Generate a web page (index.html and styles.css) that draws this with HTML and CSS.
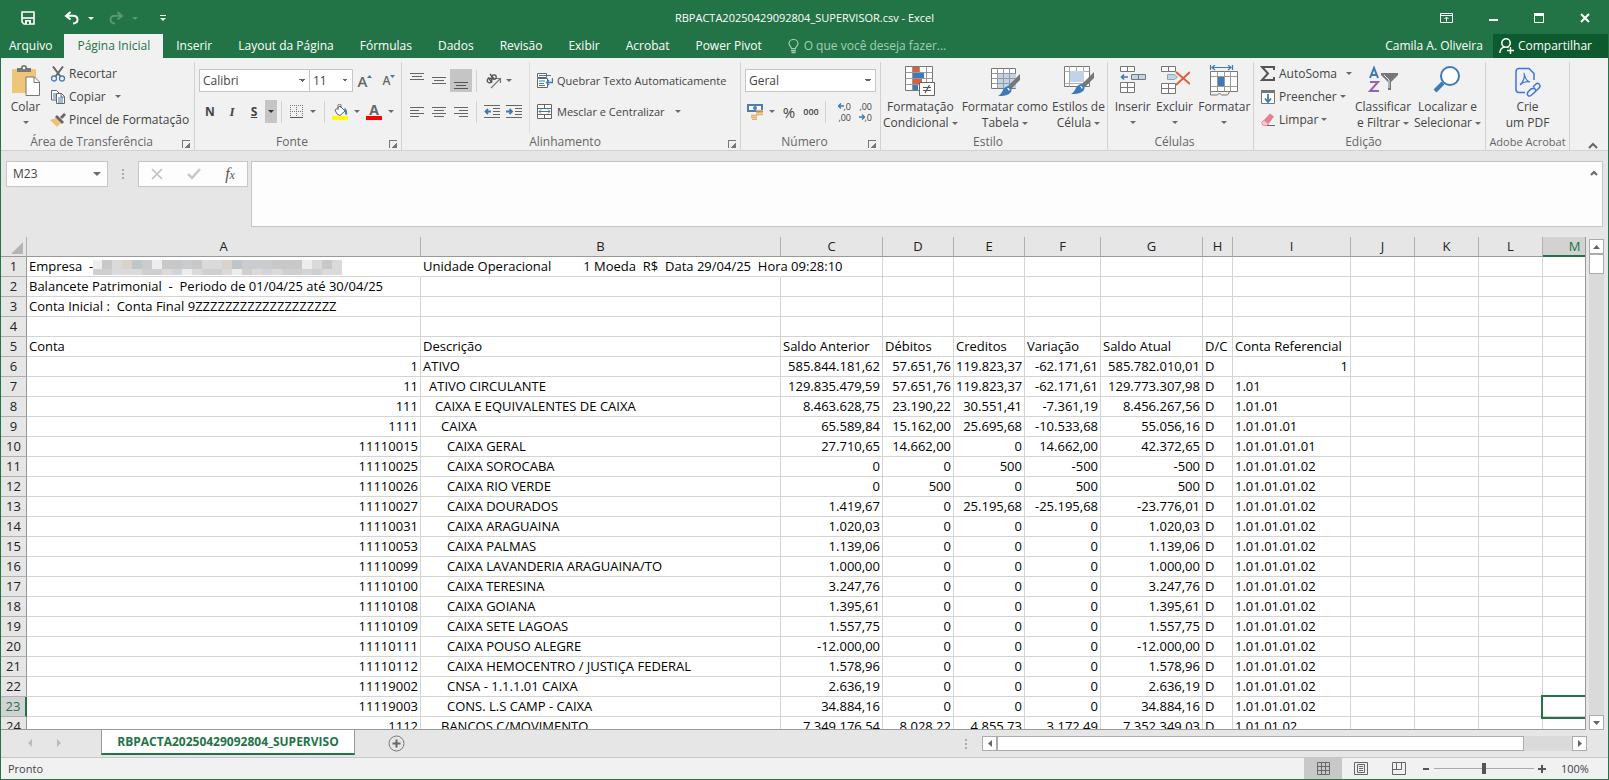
FILE: index.html
```html
<!DOCTYPE html>
<html lang="pt-BR">
<head>
<meta charset="utf-8">
<title>RBPACTA20250429092804_SUPERVISOR.csv - Excel</title>
<link rel="stylesheet" href="styles.css">
</head>
<body>
<header class="titlebar">
  <div class="quick">
    <button aria-label="Salvar"><svg width="14" height="14" viewBox="0 0 14 14"><path d="M1 1h12v12H3l-2-2z" fill="none" stroke="#fff" stroke-width="1.6"/><path d="M1 7h12" stroke="#fff" stroke-width="1.6"/><path d="M4 9h6v4H4z" fill="#fff"/><path d="M6 10.500h2V13H6z" fill="#227447"/></svg></button>
    <button class="undo" aria-label="Desfazer"><svg width="16" height="14" viewBox="0 0 16 14"><path d="M6.500 1L2 5l4.500 3.500M2.500 4.800H9c6 0 6 7.500 0 7.700" fill="none" stroke="#fff" stroke-width="2"/></svg><i class="arrow"></i></button>
    <button class="redo" aria-label="Refazer"><svg width="16" height="14" viewBox="0 0 16 14"><path d="M9.500 1L14 5 9.500 8.500M13.500 4.800H7c-6 0-6 7.500 0 7.700" fill="none" stroke="#fff" stroke-width="2"/></svg><i class="arrow"></i></button>
    <button class="custom" aria-label="Personalizar"><svg width="6" height="7" viewBox="0 0 6 7"><path d="M0 .5h6" stroke="#fff"/><path d="M0 3h6L3 6z" fill="#fff"/></svg></button>
  </div>
  <h1 class="doc-title">RBPACTA20250429092804_SUPERVISOR.csv - Excel</h1>
  <div class="window-buttons">
    <button aria-label="Opções da faixa"><svg width="13" height="10" viewBox="0 0 13 10"><path d="M.5.5h12v9H.5zM.5 2.500h12" fill="none" stroke="#fff"/><path d="M6.500 8.500V5M4.500 6l2-2 2 2" fill="none" stroke="#fff"/></svg></button>
    <button aria-label="Minimizar"><svg width="9" height="10" viewBox="0 0 9 10"><path d="M0 7h9" stroke="#fff" stroke-width="2"/></svg></button>
    <button aria-label="Maximizar"><svg width="10" height="10" viewBox="0 0 10 10"><path d="M.5.5h9v9h-9z" fill="none" stroke="#fff"/><path d="M0 1.500h10" stroke="#fff" stroke-width="3"/></svg></button>
    <button aria-label="Fechar"><svg width="10" height="10" viewBox="0 0 10 10"><path d="M1 1l8 8M9 1L1 9" stroke="#fff" stroke-width="2"/></svg></button>
  </div>
</header>
<nav class="tabs">
  <button class="file">Arquivo</button>
  <button class="active">Página Inicial</button>
  <button>Inserir</button>
  <button>Layout da Página</button>
  <button>Fórmulas</button>
  <button>Dados</button>
  <button>Revisão</button>
  <button>Exibir</button>
  <button>Acrobat</button>
  <button>Power Pivot</button>
  <label class="tell"><svg width="11" height="15" viewBox="0 0 11 15"><path d="M3.500 9.500C3.500 8 1 7 1 4.500a4.500 4 0 0 1 9 0C10 7 7.500 8 7.500 9.500z" fill="none" stroke="#a6cdb7" stroke-width="1.200"/><path d="M3 11.500h5M3.500 13.500h4" stroke="#a6cdb7" stroke-width="1.400"/></svg><input type="text" placeholder="O que você deseja fazer..." aria-label="O que você deseja fazer"></label>
  <span class="user">Camila A. Oliveira</span>
  <button class="share"><svg width="15" height="16" viewBox="0 0 15 16"><circle cx="7" cy="5" r="4.200" fill="none" stroke="#fff" stroke-width="1.500"/><path d="M.8 15c.2-3 2-5.500 5-6M8 9l1.500.7M8 12.500h7M11.500 9v7" fill="none" stroke="#fff" stroke-width="1.400"/></svg>Compartilhar</button>
</nav>

<section class="ribbon">
  <div class="group">
    <div class="group-body">
      <button class="big paste"><svg width="30" height="32" viewBox="0 0 30 32"><path d="M1 4h24v24H1z" fill="#eec679"/><path d="M6 3h4a3 3 0 0 1 6 0h4v4H6z" fill="#777"/><circle cx="13" cy="3" r="1.200" fill="#fff"/><path d="M15 12h8.500l5 5v13.500H15z" fill="#fff" stroke="#777"/><path d="M23 12v5.500h5.500" fill="none" stroke="#777"/></svg><span>Colar</span><i class="arrow"></i></button>
      <div class="stack">
        <button><svg width="16" height="16" viewBox="0 0 16 16"><path d="M3 .5l7.500 10M13 .5L5.500 10.500" stroke="#666" stroke-width="2"/><circle cx="4" cy="12.500" r="2.500" fill="none" stroke="#4a7fb5" stroke-width="1.300"/><circle cx="12" cy="12.500" r="2.500" fill="none" stroke="#4a7fb5" stroke-width="1.300"/></svg>Recortar</button>
        <button><svg width="16" height="16" viewBox="0 0 16 16"><path d="M1.500 1.500h5l2.500 2.500v7H1.500z" fill="#fff" stroke="#666"/><path d="M3 5h4M3 7h3M3 9h3" stroke="#3c7ab8"/><path d="M6.500 4.500h5l3 3v7h-8z" fill="#fff" stroke="#666"/><path d="M11 4.500V8h3.500" fill="none" stroke="#666"/><path d="M8 9h5M8 11h5M8 13h5" stroke="#3c7ab8"/></svg>Copiar<i class="arrow far"></i></button>
        <button><svg width="16" height="16" viewBox="0 0 16 16"><path d="M0 8l6-2 5 5-4 4z" fill="#eec07c"/><path d="M5 5l2-2 7 7-2 2z" fill="#666"/><path d="M10 5l4-4 2 2-4 4z" fill="#666"/></svg>Pincel de Formatação</button>
      </div>
    </div>
    <div class="group-name">Área de Transferência<button class="launch" aria-label="Opções"></button></div>
  </div>

  <div class="group">
    <div class="rows font-rows">
      <div class="row">
        <select class="font-name" aria-label="Fonte"><option>Calibri</option></select><select class="font-size" aria-label="Tamanho"><option>11</option></select>
        <button class="grow" aria-label="Aumentar fonte">A<svg width="5" height="3" viewBox="0 0 5 3"><path d="M0 3h5L2.500 0z" fill="#3c7ab8"/></svg></button>
        <button class="shrink" aria-label="Diminuir fonte">A<svg width="5" height="3" viewBox="0 0 5 3"><path d="M0 0h5L2.500 3z" fill="#3c7ab8"/></svg></button>
      </div>
      <div class="row format">
        <button class="bold">N</button><button class="italic">I</button><button class="under">S</button><button class="pressed drop" aria-label="Sublinhado"><i class="arrow dark"></i></button>
        <i class="rule"></i>
        <button class="pair" aria-label="Bordas"><svg width="14" height="14" viewBox="0 0 14 14"><path d="M.5 0v12M6.500 0v12M12.500 0v12M0 .5h13M0 6.500h13" fill="none" stroke="#777" stroke-dasharray="1 1"/><path d="M0 12.500h13" stroke="#555"/></svg><i class="arrow"></i></button>
        <i class="rule"></i>
        <button class="pair" aria-label="Cor de preenchimento"><svg width="16" height="16" viewBox="0 0 16 16"><path d="M3 6l5-4 5 5-5 4.500L5 10z" fill="#fff" stroke="#666"/><path d="M6 6V1.500a1.500 1.500 0 0 1 3 0V4" fill="none" stroke="#666"/><path d="M12 4c3 0 3.500 4 3 7l-2-1V7z" fill="#4a7fb5"/><path d="M0 12h16v4H0z" fill="#ff0"/></svg><i class="arrow"></i></button>
        <button class="pair" aria-label="Cor da fonte"><span class="font-color">A</span><i class="arrow"></i></button>
      </div>
    </div>
    <div class="group-name">Fonte<button class="launch" aria-label="Opções"></button></div>
  </div>

  <div class="group">
    <div class="align-body">
      <div class="rows align-rows">
        <div class="row">
          <button aria-label="Em cima"><svg width="14" height="16" viewBox="0 0 14 16"><path d="M0 .5h14M2 3.500h10M0 6.500h14" stroke="#666"/></svg></button><button aria-label="No meio"><svg width="14" height="16" viewBox="0 0 14 16"><path d="M0 4.500h14M2 7.500h10M0 10.500h14" stroke="#666"/></svg></button><button class="pressed" aria-label="Embaixo"><svg width="14" height="16" viewBox="0 0 14 16"><path d="M0 9.500h14M2 12.500h10M0 15.500h14" stroke="#555"/></svg></button>
          <i class="rule"></i>
          <button class="pair" aria-label="Orientação"><svg width="17" height="16" viewBox="0 0 17 16"><path d="M6 15L15 6M11 5.500h4.500V10" fill="none" stroke="#777" stroke-width="1.200"/><circle cx="4.500" cy="7.500" r="2.300" fill="none" stroke="#555" stroke-width="1.300"/><path d="M3 4.500l4 5M5 1l4.500 5.500" stroke="#555" stroke-width="1.300"/><circle cx="9" cy="4" r="2.200" fill="none" stroke="#555" stroke-width="1.300"/></svg><i class="arrow"></i></button>
        </div>
        <div class="row">
          <button aria-label="Esquerda"><svg width="14" height="12" viewBox="0 0 14 12"><path d="M0 1.500h14M0 4.500h9M0 7.500h14M0 10.500h9" stroke="#666"/></svg></button><button aria-label="Centro"><svg width="14" height="12" viewBox="0 0 14 12"><path d="M0 1.500h14M2 4.500h10M0 7.500h14M2 10.500h10" stroke="#666"/></svg></button><button aria-label="Direita"><svg width="14" height="12" viewBox="0 0 14 12"><path d="M0 1.500h14M5 4.500h9M0 7.500h14M5 10.500h9" stroke="#666"/></svg></button>
          <i class="rule"></i>
          <button aria-label="Diminuir recuo"><svg width="16" height="14" viewBox="0 0 16 14"><path d="M0 .5h16M9 3.500h7M9 6.500h7M9 9.500h7M0 12.500h16" stroke="#666"/><path d="M1.500 6.500H7M4 4L1.500 6.500 4 9" fill="none" stroke="#3c7ab8" stroke-width="1.800"/></svg></button><button aria-label="Aumentar recuo"><svg width="16" height="14" viewBox="0 0 16 14"><path d="M0 .5h16M9 3.500h7M9 6.500h7M9 9.500h7M0 12.500h16" stroke="#666"/><path d="M0 6.500h6M3.500 4L6 6.500 3.500 9" fill="none" stroke="#3c7ab8" stroke-width="1.800"/></svg></button>
        </div>
      </div>
      <div class="rows wrap-rows">
        <button class="row"><svg width="16" height="16" viewBox="0 0 16 16"><path d="M.5.5h9v4h-9zM.5 5.500h10v9H.5z" fill="#fff" stroke="#666"/><path d="M2 2.500h12M2 8h6M2 10.500h5M2 12.500h6" stroke="#3c7ab8"/><path d="M15.500 5v4.500H10M12 7l-2.500 2.500L12 12" fill="none" stroke="#3c7ab8" stroke-width="1.300"/></svg>Quebrar Texto Automaticamente</button>
        <button class="row"><svg width="16" height="16" viewBox="0 0 16 16"><path d="M.5.5h14v14H.5zM.5 4.500h14M.5 10.500h14M7.500.5v4M7.500 10.500v4" fill="#fff" stroke="#666"/><path d="M2 7.500h11M4 5.500l-2 2 2 2M11 5.500l2 2-2 2" fill="none" stroke="#3c7ab8"/></svg>Mesclar e Centralizar<i class="arrow far"></i></button>
      </div>
    </div>
    <div class="group-name">Alinhamento<button class="launch" aria-label="Opções"></button></div>
  </div>

  <div class="group">
    <div class="rows number-rows">
      <div class="row"><select class="number-format" aria-label="Formato"><option>Geral</option></select></div>
      <div class="row">
        <button class="pair" aria-label="Moeda"><svg width="16" height="16" viewBox="0 0 16 16"><path d="M0 0h16v8H0z" fill="#4a7fb5"/><path d="M2 2h12v4H2z" fill="#fff"/><circle cx="8" cy="4" r="2" fill="#4a7fb5"/><path d="M9 6.500h7M9 8.500h7M9 10.500h7M4 11.500h6M4 13.500h6M5 15.500h5" stroke="#e5b066" stroke-width="1.500"/></svg><i class="arrow"></i></button>
        <button class="percent">%</button><button class="thousand">000</button>
        <i class="rule"></i>
        <button aria-label="Aumentar casas" class="decimals"><span><svg width="6" height="6" viewBox="0 0 6 6"><path d="M0 3h6M3 .5L.5 3 3 5.500" fill="none" stroke="#3c7ab8" stroke-width="1.400"/></svg>,0</span><span>,00</span></button>
        <button aria-label="Diminuir casas" class="decimals"><span>,00</span><span><svg width="6" height="6" viewBox="0 0 6 6"><path d="M0 3h6M3 .5L5.500 3 3 5.500" fill="none" stroke="#3c7ab8" stroke-width="1.400"/></svg>,0</span></button>
      </div>
    </div>
    <div class="group-name">Número<button class="launch" aria-label="Opções"></button></div>
  </div>

  <div class="group">
    <div class="group-body styles-body">
      <button class="big"><svg width="30" height="32" viewBox="0 0 30 32"><path d="M.5 1.500h27v24H.5z" fill="#fff" stroke="#777"/><path d="M8 2h6v5H8zM8 13h9v6H8z" fill="#dc5f3c"/><path d="M8 8h11v5H8zM8 20h5v5H8z" fill="#3c7ab8"/><path d="M.5 7.500h27M.5 13.500h27M.5 19.500h27M7.500 1.500v24M14.500 1.500v6M21.500 1.500v24" stroke="#999" fill="none"/><path d="M14.500 17.500h15v13h-15z" fill="#fff" stroke="#666"/><path d="M18 22.500h8M18 25.500h8M24.500 20l-4.500 8" stroke="#555" stroke-width="1.200"/></svg><span>Formatação<br>Condicional<i class="arrow"></i></span></button>
      <button class="big"><svg width="30" height="32" viewBox="0 0 30 32"><path d="M1.500 3.500h24v20h-24z" fill="#fff" stroke="#777"/><path d="M8 9h18v14H8z" fill="#bfd3ea"/><path d="M1.500 8.500h24M1.500 13.500h24M1.500 18.500h24M7.500 3.500v20M13.500 3.500v20M19.500 3.500v20" stroke="#999"/><path d="M30 9v6l-9 9-3-3z" fill="#777"/><path d="M18 21c4 0 4 4 3 6-3 4-8 4-13 4 5-2 4-9 10-10z" fill="#3c7ab8"/><path d="M17 23c3 0 3 2 2 3z" fill="#fff"/></svg><span>Formatar como<br>Tabela<i class="arrow"></i></span></button>
      <button class="big"><svg width="30" height="32" viewBox="0 0 30 32"><path d="M.5 1.500h25v20H.5z" fill="#fff" stroke="#777"/><path d="M.5 6.500h25M.5 18.500h25M5.500 1.500v20M12.500 1.500v5M19.500 1.500v20" stroke="#aaa"/><path d="M6 6h14v11H6z" fill="#bfd3ea"/><path d="M30 7v6l-9 9-3-3z" fill="#777"/><path d="M17 19c4 0 4 4 3 6-3 4-8 4-13 4 5-2 4-9 10-10z" fill="#3c7ab8"/><path d="M16 21c3 0 3 2 2 3z" fill="#fff"/></svg><span>Estilos de<br>Célula<i class="arrow"></i></span></button>
    </div>
    <div class="group-name">Estilo</div>
  </div>

  <div class="group">
    <div class="group-body cells-body">
      <button class="big"><svg width="28" height="32" viewBox="0 0 28 32"><path d="M1.500 1.500h14v5h-14zM8.500 1.500v5M1.500 17.500h14v10h-14zM8.500 17.500v10M1.500 22.500h14" fill="#fff" stroke="#777"/><path d="M12.500 9.500h14v5h-14zM19.500 9.500v5" fill="#bfd3ea" stroke="#777"/><path d="M2 12h7M5 9.500L2.500 12 5 14.500" fill="none" stroke="#3c7ab8" stroke-width="1.600"/></svg><span>Inserir</span><i class="arrow"></i></button>
      <button class="big"><svg width="30" height="32" viewBox="0 0 30 32"><path d="M1.500 1.500h14v5h-14zM8.500 1.500v5M1.500 18.500h14v10h-14zM8.500 18.500v10M1.500 23.500h14" fill="#fff" stroke="#777"/><path d="M7.500 9.500h7l3 2.500-3 2.500h-7z" fill="#bfd3ea" stroke="#8aa"/><path d="M16 7l14 12M30 7L16 20" stroke="#dc5f3c" stroke-width="2"/></svg><span>Excluir</span><i class="arrow"></i></button>
      <button class="big"><svg width="30" height="32" viewBox="0 0 30 32"><path d="M1.500 0v5M23.500 0v5M3 2.500h19M6 0L3 2.500 6 5M19 0l3 2.500L19 5" fill="none" stroke="#3c7ab8" stroke-width="1.200"/><path d="M1.500 6.500h27v20h-27z" fill="#fff" stroke="#777"/><path d="M9 12h7v9H9z" fill="#3c7ab8"/><path d="M1.500 11.500h27M1.500 21.500h27M8.500 6.500v20M15.500 6.500v20M21.500 6.500v20" stroke="#999"/><path d="M1.500 26.500V30h7l2-2 2 2h6l2-3" fill="none" stroke="#777"/></svg><span>Formatar</span><i class="arrow"></i></button>
    </div>
    <div class="group-name">Células</div>
  </div>

  <div class="group">
    <div class="group-body edit-body">
      <div class="stack">
        <button><svg width="16" height="16" viewBox="0 0 16 16"><path d="M14 4V1H2l6 6.500L2 14h12v-3" fill="none" stroke="#555" stroke-width="2"/></svg>AutoSoma<i class="arrow far"></i></button>
        <button><svg width="16" height="16" viewBox="0 0 16 16"><path d="M1.500 1.500h13v13h-13z" fill="#fff" stroke="#777"/><path d="M1 1h14v3H1z" fill="#777"/><path d="M8 5v8M5 9.500L8 13l3-3.500" fill="none" stroke="#3c7ab8" stroke-width="1.800"/></svg>Preencher<i class="arrow"></i></button>
        <button><svg width="16" height="16" viewBox="0 0 16 16"><path d="M4 8l6-6.500 4 3L8.500 12z" fill="#e87f91"/><path d="M1.500 10.500L4 8l4.500 4L6 13.500H3z" fill="#f7c5cd" stroke="#e87f91" stroke-width=".8"/><path d="M7 13.500h8" stroke="#666"/></svg>Limpar<i class="arrow"></i></button>
      </div>
      <button class="big"><svg width="30" height="32" viewBox="0 0 30 32"><path d="M2 13L6 3l4 10M3.500 10h5" fill="none" stroke="#3c7ab8" stroke-width="2"/><path d="M2 17h8L2 26h9" fill="none" stroke="#9463b5" stroke-width="2"/><path d="M13 8h17v2l-7 7v8h-3v-8l-7-7z" fill="#777"/><path d="M16 10l5 5v8" fill="none" stroke="#eee"/></svg><span>Classificar<br>e Filtrar<i class="arrow"></i></span></button>
      <button class="big"><svg width="30" height="32" viewBox="0 0 30 32"><circle cx="18" cy="11" r="9" fill="#fff" stroke="#3c7ab8" stroke-width="2"/><path d="M11 18L3 26" stroke="#3c7ab8" stroke-width="4"/></svg><span>Localizar e<br>Selecionar<i class="arrow"></i></span></button>
    </div>
    <div class="group-name">Edição</div>
  </div>

  <div class="group">
    <div class="group-body acrobat-body">
      <button class="big"><svg width="30" height="32" viewBox="0 0 30 32"><path d="M12 27.500H6a3 3 0 0 1-3-3v-18a3 3 0 0 1 3-3h10l5 5V15" fill="none" stroke="#3f74e0" stroke-width="1.500"/><path d="M11 8c1 6 3 8 6 9-4-1-7 0-10 3 3-3 5-8 4-12z" fill="none" stroke="#3f74e0" stroke-width="1.200"/><path d="M20 22l3-3c2-2 5 1 3.500 3.500L23 26M22 23l-4 1-3 3c-2 3 1 5 3 3.500L22 27c1-1 1-3-1-3.500" fill="none" stroke="#3f74e0" stroke-width="1.500"/></svg><span>Crie<br>um PDF</span></button>
    </div>
    <div class="group-name wide">Adobe Acrobat</div>
  </div>
  <button class="collapse" aria-label="Recolher"><svg width="10" height="7" viewBox="0 0 10 7"><path d="M1 6l4-4 4 4" fill="none" stroke="#666" stroke-width="2"/></svg></button>
</section>

<section class="formula">
  <label class="name-box"><input type="text" value="M23" aria-label="Caixa de nome"><i class="arrow"></i></label>
  <i class="grip"></i>
  <div class="formula-buttons">
    <button aria-label="Cancelar"><svg width="12" height="12" viewBox="0 0 12 12"><path d="M1 1l10 10M11 1L1 11" stroke="#c0c0c0" stroke-width="1.600"/></svg></button>
    <button aria-label="Inserir"><svg width="14" height="12" viewBox="0 0 14 12"><path d="M1 6l4 4 8-9" fill="none" stroke="#c8c8c8" stroke-width="2.500"/></svg></button>
    <button class="fx"><i>f</i><small>x</small></button>
  </div>
  <label class="formula-input"><textarea aria-label="Barra de fórmulas"></textarea><svg width="8" height="6" viewBox="0 0 8 6"><path d="M1 5l3-3 3 3" fill="none" stroke="#666" stroke-width="2"/></svg></label>
</section>

<main class="sheet">
  <div class="pane">
    <table class="grid">
      <colgroup><col class="c-row"><col class="c-a"><col class="c-b"><col class="c-c"><col class="c-d"><col class="c-e"><col class="c-f"><col class="c-g"><col class="c-h"><col class="c-i"><col class="c-j"><col class="c-j"><col class="c-j"><col class="c-j"></colgroup>
      <thead><tr><th class="corner"><svg width="12" height="12" viewBox="0 0 12 12"><path d="M12 0v12H0z" fill="#b4b4b4"/></svg><th>A<th>B<th>C<th>D<th>E<th>F<th>G<th>H<th>I<th>J<th>K<th>L<th class="current">M</tr></thead>
      <tbody class="intro">
        <tr><th>1<td class="open">Empresa  -<svg class="mosaic" width="249" height="15" viewBox="0 0 249 15"><path d="M0 0h249v15H0z" fill="#dadada"/><path d="M0 0h9v9H0zM59 0h10v9H59zM209 0h10v9h-10zM89 9h10v6H89zM139 9h10v6h-10z" fill="#ededed"/><path d="M9 0h10v9H9zM69 0h20v9H69zM99 0h10v9H99zM179 0h30v9h-30zM229 0h10v9h-10z" fill="#c8c8c8"/><path d="M39 0h10v9H39zM139 0h10v9h-10z" fill="#c0c5c9"/><path d="M49 0h10v9H49zM89 0h10v9H89zM149 0h30v9h-30z" fill="#cbccd0"/><path d="M29 0h10v9H29zM129 0h10v9h-10z" fill="#d9d3cc"/><path d="M0 9h19v6H0zM49 9h20v6H49zM109 9h20v6h-20zM149 9h10v6h-10zM189 9h20v6h-20zM219 9h10v6h-10z" fill="#cfcfcf"/><path d="M79 9h10v6H79zM169 9h10v6h-10zM209 9h10v6h-10z" fill="#d0d5d9"/></svg><td class="open">Unidade Operacional<span class="unit">1 Moeda  R$  Data 29/04/25  Hora 09:28:10</span><td><td><td><td><td><td><td><td><td><td><td></tr>
        <tr><th>2<td>Balancete Patrimonial  -  Periodo de 01/04/25 até 30/04/25<td><td><td><td><td><td><td><td><td><td><td><td></tr>
        <tr><th>3<td>Conta Inicial :  Conta Final 9ZZZZZZZZZZZZZZZZZZZ<td><td><td><td><td><td><td><td><td><td><td><td></tr>
        <tr><th>4<td><td><td><td><td><td><td><td><td><td><td><td><td></tr>
        <tr><th>5<td>Conta<td>Descrição<td>Saldo Anterior<td>Débitos<td>Creditos<td>Variação<td>Saldo Atual<td>D/C<td>Conta Referencial<td><td><td><td></tr>
      </tbody>
      <tbody class="data">
        <tr><th>6<td>1<td>ATIVO<td>585.844.181,62<td>57.651,76<td>119.823,37<td>-62.171,61<td>585.782.010,01<td>D<td class="num">1<td><td><td><td></tr>
        <tr><th>7<td>11<td class="l1">ATIVO CIRCULANTE<td>129.835.479,59<td>57.651,76<td>119.823,37<td>-62.171,61<td>129.773.307,98<td>D<td>1.01<td><td><td><td></tr>
        <tr><th>8<td>111<td class="l2">CAIXA E EQUIVALENTES DE CAIXA<td>8.463.628,75<td>23.190,22<td>30.551,41<td>-7.361,19<td>8.456.267,56<td>D<td>1.01.01<td><td><td><td></tr>
        <tr><th>9<td>1111<td class="l3">CAIXA<td>65.589,84<td>15.162,00<td>25.695,68<td>-10.533,68<td>55.056,16<td>D<td>1.01.01.01<td><td><td><td></tr>
        <tr><th>10<td>11110015<td class="l4">CAIXA GERAL<td>27.710,65<td>14.662,00<td>0<td>14.662,00<td>42.372,65<td>D<td>1.01.01.01.01<td><td><td><td></tr>
        <tr><th>11<td>11110025<td class="l4">CAIXA SOROCABA<td>0<td>0<td>500<td>-500<td>-500<td>D<td>1.01.01.01.02<td><td><td><td></tr>
        <tr><th>12<td>11110026<td class="l4">CAIXA RIO VERDE<td>0<td>500<td>0<td>500<td>500<td>D<td>1.01.01.01.02<td><td><td><td></tr>
        <tr><th>13<td>11110027<td class="l4">CAIXA DOURADOS<td>1.419,67<td>0<td>25.195,68<td>-25.195,68<td>-23.776,01<td>D<td>1.01.01.01.02<td><td><td><td></tr>
        <tr><th>14<td>11110031<td class="l4">CAIXA ARAGUAINA<td>1.020,03<td>0<td>0<td>0<td>1.020,03<td>D<td>1.01.01.01.02<td><td><td><td></tr>
        <tr><th>15<td>11110053<td class="l4">CAIXA PALMAS<td>1.139,06<td>0<td>0<td>0<td>1.139,06<td>D<td>1.01.01.01.02<td><td><td><td></tr>
        <tr><th>16<td>11110099<td class="l4">CAIXA LAVANDERIA ARAGUAINA/TO<td>1.000,00<td>0<td>0<td>0<td>1.000,00<td>D<td>1.01.01.01.02<td><td><td><td></tr>
        <tr><th>17<td>11110100<td class="l4">CAIXA TERESINA<td>3.247,76<td>0<td>0<td>0<td>3.247,76<td>D<td>1.01.01.01.02<td><td><td><td></tr>
        <tr><th>18<td>11110108<td class="l4">CAIXA GOIANA<td>1.395,61<td>0<td>0<td>0<td>1.395,61<td>D<td>1.01.01.01.02<td><td><td><td></tr>
        <tr><th>19<td>11110109<td class="l4">CAIXA SETE LAGOAS<td>1.557,75<td>0<td>0<td>0<td>1.557,75<td>D<td>1.01.01.01.02<td><td><td><td></tr>
        <tr><th>20<td>11110111<td class="l4">CAIXA POUSO ALEGRE<td>-12.000,00<td>0<td>0<td>0<td>-12.000,00<td>D<td>1.01.01.01.02<td><td><td><td></tr>
        <tr><th>21<td>11110112<td class="l4">CAIXA HEMOCENTRO / JUSTIÇA FEDERAL<td>1.578,96<td>0<td>0<td>0<td>1.578,96<td>D<td>1.01.01.01.02<td><td><td><td></tr>
        <tr><th>22<td>11119002<td class="l4">CNSA - 1.1.1.01 CAIXA<td>2.636,19<td>0<td>0<td>0<td>2.636,19<td>D<td>1.01.01.01.02<td><td><td><td></tr>
        <tr><th class="current">23<td>11119003<td class="l4">CONS. L.S CAMP - CAIXA<td>34.884,16<td>0<td>0<td>0<td>34.884,16<td>D<td>1.01.01.01.02<td><td><td><td class="selected"></tr>
        <tr><th>24<td>1112<td class="l3">BANCOS C/MOVIMENTO<td>7.349.176,54<td>8.028,22<td>4.855,73<td>3.172,49<td>7.352.349,03<td>D<td>1.01.01.02<td><td><td><td></tr>
      </tbody>
    </table>
  </div>
  <div class="vscroll">
    <button aria-label="Para cima"><svg width="7" height="4" viewBox="0 0 7 4"><path d="M0 4h7L3.500 0z" fill="#666"/></svg></button>
    <div class="vthumb"></div>
    <button class="end" aria-label="Para baixo"><svg width="7" height="4" viewBox="0 0 7 4"><path d="M0 0h7L3.500 4z" fill="#666"/></svg></button>
  </div>
</main>

<div class="sheet-bar">
  <div class="sheet-nav">
    <button aria-label="Anterior"><svg width="4" height="8" viewBox="0 0 4 8"><path d="M4 0v8L0 4z" fill="#bbb"/></svg></button>
    <button aria-label="Próxima"><svg width="4" height="8" viewBox="0 0 4 8"><path d="M0 0v8l4-4z" fill="#bbb"/></svg></button>
  </div>
  <button class="sheet-tab">RBPACTA20250429092804_SUPERVISO</button>
  <button class="add" aria-label="Nova planilha"><svg width="17" height="17" viewBox="0 0 17 17"><circle cx="8.500" cy="8.500" r="7.500" fill="none" stroke="#777"/><path d="M4.500 8.500h8M8.500 4.500v8" stroke="#666" stroke-width="2"/></svg></button>
  <i class="grip"></i>
  <div class="hscroll">
    <button aria-label="Esquerda"><svg width="4" height="7" viewBox="0 0 4 7"><path d="M4 0v7L0 3.500z" fill="#666"/></svg></button>
    <div class="hthumb"></div>
    <button class="end" aria-label="Direita"><svg width="4" height="7" viewBox="0 0 4 7"><path d="M0 0v7l4-3.500z" fill="#666"/></svg></button>
  </div>
</div>

<footer class="status">
  <span class="ready">Pronto</span>
  <button class="view on" aria-label="Normal"><svg width="13" height="13" viewBox="0 0 13 13"><path d="M.5.5h12v12H.5zM4.500.5v12M8.500.5v12M.5 4.500h12M.5 8.500h12" fill="none" stroke="#666"/></svg></button>
  <button class="view" aria-label="Layout da Página"><svg width="14" height="13" viewBox="0 0 14 13"><path d="M.5.5h13v12H.5zM3.500 2.500h7v8h-7zM5 4.500h4M5 6.500h4M5 8.500h4" fill="none" stroke="#666"/></svg></button>
  <button class="view" aria-label="Quebra de Página"><svg width="14" height="13" viewBox="0 0 14 13"><path d="M.5.5h13v12H.5zM4.500.5v7M9.500.5v7M.5 7.500h9" fill="none" stroke="#666"/></svg></button>
  <button class="zoom-step" aria-label="Menos zoom"><svg width="8" height="8" viewBox="0 0 8 8"><path d="M1 4h6" stroke="#555" stroke-width="2"/></svg></button>
  <input class="zoom" type="range" min="0" max="100" value="50" aria-label="Zoom">
  <button class="zoom-step" aria-label="Mais zoom"><svg width="8" height="8" viewBox="0 0 8 8"><path d="M0 4h8M4 0v8" stroke="#555" stroke-width="2"/></svg></button>
  <span class="percent-zoom">100%</span>
</footer>
</body>
</html>
```
FILE: styles.css
```css
* { box-sizing: border-box; }
html, body { margin: 0; height: 100%; }
body {
  display: flex;
  flex-direction: column;
  overflow: hidden;
  border: solid #227447;
  border-width: 0 1px 1px;
  background: #e6e6e6;
  color: #444;
  font: 12px/16px "Open Sans", "Noto Sans", sans-serif;
}
button, input, select, textarea {
  margin: 0;
  padding: 0;
  border: 0;
  border-radius: 0;
  outline: 0;
  background: none;
  color: inherit;
  font: inherit;
  white-space: nowrap;
}
svg { display: block; flex: none; }
.arrow {
  flex: none;
  display: inline-block;
  border: solid transparent;
  border-width: 3px 3px 0;
  border-top-color: #6a6a6a;
}
.arrow.dark { border-top-color: #333; }

/* Title bar */
.titlebar {
  flex: none;
  display: grid;
  grid-template-columns: 1fr auto 1fr;
  align-items: center;
  height: 34px;
  background: #227447;
  color: #fff;
}
.quick { display: flex; align-items: center; padding-left: 20px; }
.quick button { display: flex; align-items: center; gap: 8px; }
.quick .arrow { border-top-color: #fff; }
.quick .undo { margin-left: 29px; }
.quick .redo { margin-left: 14px; opacity: .25; }
.quick .custom { margin-left: 22px; }
.doc-title { margin: 0; font-size: 11px; font-weight: 400; line-height: 36px; }
.window-buttons { display: flex; justify-content: flex-end; align-items: center; gap: 36px; padding-right: 18px; }

/* Ribbon tabs */
.tabs { flex: none; display: flex; align-items: stretch; height: 24px; background: #227447; color: #fff; }
.tabs button { padding: 0 13px; }
.tabs .file { padding: 0 12px 0 8px; }
.tabs .active { background: #f1f1f1; color: #227447; }
.tell { flex: 1; display: flex; align-items: center; gap: 5px; padding-left: 13px; }
.tell input { width: 180px; }
.tell input::placeholder { color: #a6cdb7; opacity: 1; }
.user { padding-right: 10px; line-height: 24px; }
.tabs .share { display: flex; align-items: center; gap: 4px; padding: 0 16px 0 6px; background: #0e5a2f; }

/* Ribbon */
.ribbon {
  flex: none;
  display: grid;
  grid-template-columns: 194px 207px 339px 140px 227px 146px 232px 84px 1fr;
  height: 93px;
  background: #f1f1f1;
  border-bottom: 1px solid #d2d2d2;
}
.group { display: flex; flex-direction: column; min-width: 0; margin: 4px 0; border-right: 1px solid #d2d2d2; }
.group-body, .rows, .align-body { height: 71px; }
.group-body, .align-body { display: flex; }
.group-name { display: grid; grid-template-columns: 0 1fr 12px; line-height: 18px; color: #666; text-align: center; white-space: nowrap; }
.group-name::before { content: ""; }
.group-name.wide { display: block; font-size: 11px; }
.launch { width: 8px; height: 8px; margin-top: 7px; border: solid #777; border-width: 1px 0 0 1px; background: linear-gradient(135deg, transparent 58%, #777 60%); }
.big { display: flex; flex-direction: column; align-items: center; padding-top: 3px; }
.big > span { margin-top: 2px; }
.big > .arrow { margin-top: 6px; }
.big span .arrow { margin: 0 0 2px 3px; }
.paste { width: 49px; }
.stack { display: flex; flex-direction: column; }
.stack button { display: flex; align-items: center; gap: 3px; height: 23px; }
.arrow.far { margin-left: 6px; }
.rows { display: flex; flex-direction: column; gap: 8px; padding-top: 7px; }
.row { display: flex; align-items: center; height: 23px; }
.row button { display: flex; align-items: center; justify-content: center; }
.rule { width: 1px; height: 22px; background: #d2d2d2; }
.pressed { background: #c5c5c5; }
.pair { gap: 6px; }

select {
  appearance: none;
  height: 23px;
  padding: 0 3px;
  border: 1px solid #c6c6c6;
  background-color: #fff;
  background-image: linear-gradient(to bottom left, #666 50%, transparent 50%), linear-gradient(to bottom right, #666 50%, transparent 50%);
  background-repeat: no-repeat;
  background-size: 3px 3px;
  background-position: right 7px center, right 4px center;
}
.font-rows { padding-left: 4px; }
.font-name { width: 111px; }
.font-size { width: 43px; border-left: 0; }
.grow, .shrink { width: 24px; color: #666; font-weight: 600; }
.grow { font-size: 15px; }
.grow svg, .shrink svg { margin-bottom: 9px; }
.format button { width: 22px; }
.format .bold { font-weight: 700; }
.format .italic { font: italic 700 13px/16px "Liberation Serif", serif; }
.format .under { font-weight: 700; text-decoration: underline; }
.format .drop { width: 12px; height: 23px; }
.format .rule { margin: 0 4px; }
.format .pair { width: 34px; }
.font-color { width: 16px; height: 16px; border-bottom: 4px solid #f00; font-weight: 700; font-size: 14px; line-height: 12px; color: #666; }

.align-rows { width: 128px; padding-left: 4px; border-right: 1px solid #ddd; }
.align-rows button { width: 22px; height: 23px; }
.align-rows .rule { margin: 0 4px; }
.align-rows .pair { width: 34px; gap: 4px; }
.wrap-rows { padding-left: 7px; }
.wrap-rows .row { gap: 4px; font-size: 11px; }

.number-rows { padding: 7px 4px 0; }
.number-format { width: 131px; }
.number-rows .pair { width: 32px; }
.number-rows .percent { width: 24px; font-size: 15px; }
.number-rows .thousand { width: 20px; font-size: 9px; font-weight: 600; }
.number-rows .rule { margin: 0 4px; }
.row .decimals { flex-direction: column; align-items: flex-end; width: 21px; font-size: 9px; line-height: 11px; }
.decimals span { display: flex; align-items: center; }

.styles-body, .cells-body { justify-content: space-around; }
.cells-body { padding-left: 4px; }
.edit-body { padding: 0 4px 0 6px; justify-content: space-between; }
.acrobat-body { justify-content: center; }
.collapse { display: flex; align-items: flex-end; justify-content: flex-end; padding: 0 10px 6px 0; }

/* Formula bar */
.formula { flex: none; display: flex; align-items: flex-start; height: 86px; padding: 10px 5px 0; }
.name-box { display: flex; align-items: center; width: 102px; height: 26px; padding: 0 6px; border: 1px solid #c6c6c6; background: #fdfdfd; }
.name-box input { flex: 1; min-width: 0; }
.name-box .arrow { border-width: 4px 4px 0; }
.grip { width: 2px; height: 11px; background: repeating-linear-gradient(#aaa 0 2px, transparent 2px 4px); }
.formula .grip { margin: 8px 14px 0; }
.formula-buttons { display: flex; align-items: center; justify-content: space-around; width: 110px; height: 26px; border: 1px solid #c6c6c6; background: #fdfdfd; }
.fx { color: #555; font-family: "Liberation Serif", serif; font-size: 16px; }
.fx small { font-size: 12px; font-style: italic; }
.formula-input { flex: 1; display: flex; height: 66px; margin-left: 3px; padding: 8px 4px; border: 1px solid #c6c6c6; background: #fdfdfd; }
.formula-input textarea { flex: 1; resize: none; }

/* Worksheet */
.sheet { flex: 1; min-height: 0; display: flex; background: #e6e6e6; }
.pane { flex: 1; min-width: 0; overflow: hidden; border: solid #999; border-width: 0 1px 1px 0; }
.grid {
  width: 1606px;
  table-layout: fixed;
  border-spacing: 0;
  background: #fff;
  color: #000;
  font: 13px/19px "Open Sans", "Noto Sans", sans-serif;
}
.c-row { width: 26px; }
.c-a { width: 394px; }
.c-b { width: 360px; }
.c-c, .c-g { width: 102px; }
.c-d, .c-e { width: 71px; }
.c-f { width: 76px; }
.c-h { width: 30px; }
.c-i { width: 118px; }
.c-j { width: 64px; }
.grid th, .grid td {
  height: 20px;
  padding: 0 2px;
  border: solid #d4d4d4;
  border-width: 0 1px 1px 0;
  white-space: pre;
  text-align: left;
  font-weight: 400;
}
.grid th { padding: 0; border-color: #b0b0b0; background: #e6e6e6; color: #222; text-align: center; }
.grid tbody th { border-right-color: #999; }
.grid thead th { border-bottom-color: #999; }
.grid .corner svg { margin: 2px 0 0 10px; }
.grid .current { background: #d2d2d2; color: #227447; }
.grid thead .current { border-bottom: 2px solid #227447; line-height: 18px; }
.grid tbody .current { border-right: 2px solid #227447; }
.grid .open { border-right-color: #fff; }
.mosaic { display: inline-block; vertical-align: middle; }
.unit { margin-left: 32px; }
.data td:nth-child(2), .data td:nth-child(n+4):nth-child(-n+8), .data .num { text-align: right; }
.data .l1 { padding-left: 8px; }
.data .l2 { padding-left: 14px; }
.data .l3 { padding-left: 20px; }
.data .l4 { padding-left: 26px; }
.grid .selected { outline: 2px solid #227447; }

.vscroll, .hscroll { background: #dadada; display: flex; }
.vscroll { flex-direction: column; width: 15px; margin: 2px 4px 0 3px; }
.vscroll button, .hscroll button { flex: none; display: flex; align-items: center; justify-content: center; width: 15px; height: 15px; border: 1px solid #ababab; background: #fff; }
.vthumb { height: 20px; border: 1px solid #ababab; background: #fff; }
.vscroll .end { margin-top: auto; }

/* Sheet tabs */
.sheet-bar { flex: none; display: flex; align-items: flex-start; height: 27px; }
.sheet-nav { display: flex; gap: 25px; width: 100px; padding: 9px 0 0 27px; }
.sheet-tab { min-width: 254px; height: 25px; padding: 0 12px; border: solid #999; border-width: 0 1px; border-bottom: 2px solid #227447; background: #fff; color: #227447; font-weight: 700; }
.add { margin: 5px 0 0 33px; }
.sheet-bar .grip { margin: 9px 15px 0 auto; }
.hscroll { width: 38%; max-width: 605px; margin: 6px 21px 0 0; }
.hthumb { flex: 1; margin-right: 48px; border: 1px solid #ababab; background: #fff; }

/* Status bar */
.status { flex: none; display: flex; align-items: center; height: 22px; border-top: 1px solid #c6c6c6; background: #f1f1f1; font-size: 11px; }
.ready { flex: 1; padding-left: 7px; }
.view { display: flex; align-items: center; justify-content: center; width: 38px; height: 21px; }
.view.on { background: #c8c8c8; }
.zoom-step { padding: 0 4px; }
.zoom { appearance: none; width: 100px; height: 12px; background: linear-gradient(#aaa, #aaa) center / 100% 1px no-repeat; }
.zoom::-webkit-slider-thumb { appearance: none; width: 4px; height: 11px; background: #555; }
.percent-zoom { width: 58px; padding-left: 11px; }
```
